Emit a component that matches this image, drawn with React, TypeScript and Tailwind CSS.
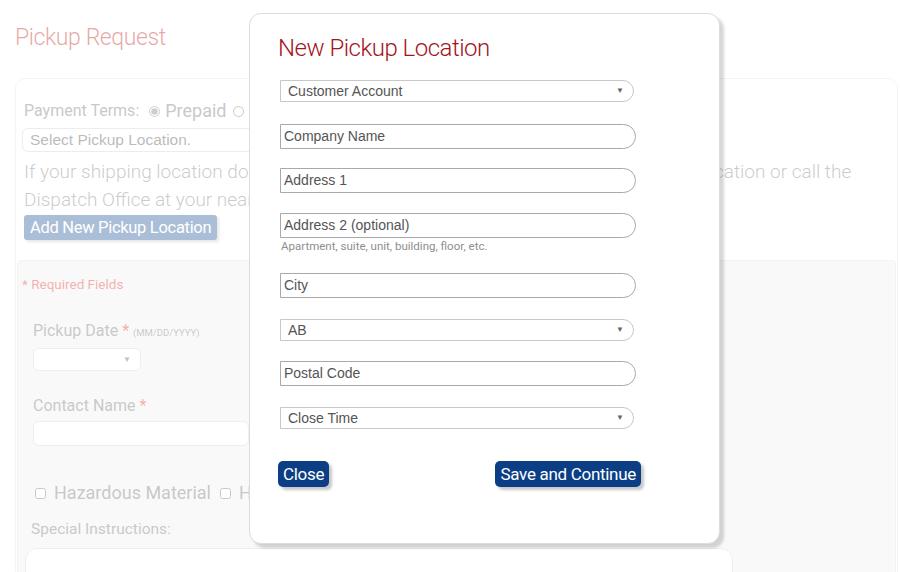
import React from 'react';

const arial = { fontFamily: '"Liberation Sans", Arial, sans-serif' };

function Arrow() {
  return <span className="absolute right-[9px] top-1/2 -translate-y-1/2 text-[8px] leading-none text-[#666]">▼</span>;
}

function ModalSelect({ label, className = '' }: { label: string; className?: string }) {
  return (
    <div
      className={`relative h-[22px] w-[354px] rounded-r-[11px] border border-[#c8c8c8] bg-white pl-[7px] text-[14px] leading-[20px] text-[#555] ${className}`}
      style={arial}
    >
      {label}
      <Arrow />
    </div>
  );
}

function ModalInput({ label, className = '' }: { label: string; className?: string }) {
  return (
    <div
      className={`h-[25px] w-[356px] rounded-r-[13px] border border-[#a9a9a9] bg-white pl-[3px] text-[14px] leading-[23px] text-[#555] ${className}`}
      style={arial}
    >
      {label}
    </div>
  );
}

function NewLocationModal() {
  const btn =
    'h-[26px] rounded-[5px] bg-[#0b3e85] text-[17px] leading-[26px] tracking-[-0.3px] text-white shadow-[3px_3px_3px_rgba(0,0,0,0.22)]';
  return (
    <div className="absolute left-[249px] top-[13px] h-[531px] w-[471px] rounded-[12px] border border-[#dcdcdc] bg-white pl-[30px] pt-[18px] shadow-[4px_4px_3px_rgba(0,0,0,0.16)]">
      <h2
        className="ml-[-2px] text-[24px] leading-[32px] tracking-[-0.5px] text-[#a3141b]"
        style={{ fontFamily: 'Roboto, sans-serif', fontWeight: 300 }}
      >
        New Pickup Location
      </h2>
      <ModalSelect label="Customer Account" className="mt-[16px]" />
      <ModalInput label="Company Name" className="mt-[22px]" />
      <ModalInput label="Address 1" className="mt-[19px]" />
      <ModalInput label="Address 2 (optional)" className="mt-[20px]" />
      <p className="mt-[1px] pl-[1px] text-[11.5px] leading-[15px] text-[#8e8e8e]" style={{ fontFamily: 'Roboto, sans-serif' }}>
        Apartment, suite, unit, building, floor, etc.
      </p>
      <ModalInput label="City" className="mt-[19px]" />
      <ModalSelect label="AB" className="mt-[21px]" />
      <ModalInput label="Postal Code" className="mt-[20px]" />
      <ModalSelect label="Close Time" className="mt-[21px]" />
      <div className="ml-[-2px] mt-[32px] flex w-[363px] items-center justify-between">
        <button className={`${btn} px-[5px]`} style={{ fontFamily: 'Roboto, sans-serif' }}>
          Close
        </button>
        <button className={`${btn} px-[5px]`} style={{ fontFamily: 'Roboto, sans-serif' }}>
          Save and Continue
        </button>
      </div>
    </div>
  );
}

export default function App() {
  const roboto = { fontFamily: 'Roboto, sans-serif' };
  return (
    <div className="relative h-[572px] w-[900px] overflow-hidden bg-white" style={roboto}>
      {/* page behind the modal */}
      <div className="pl-[15px] pr-[2px] pt-[21px]">
        <h1 className="text-[23px] leading-[33px] tracking-[-0.4px] text-[#c4261c]" style={{ fontWeight: 300 }}>
          Pickup Request
        </h1>
        <div className="mt-[24px] rounded-[10px] border border-[#e4e4e4]">
          <div className="px-[8px] pt-[21px]">
            <div className="flex items-center text-[16px] leading-[22px] text-[#767676]">
              <span>Payment Terms:</span>
              <label className="ml-[10px] flex items-center gap-[5px] text-[18px]">
                <input type="radio" defaultChecked className="h-[11px] w-[11px] accent-[#888]" />
                Prepaid
              </label>
              <label className="ml-[6px] flex items-center gap-[5px] text-[18px]">
                <input type="radio" className="h-[11px] w-[11px]" />
                Collect
              </label>
            </div>
            <div
              className="ml-[-2px] mt-[6px] h-[24px] w-[560px] rounded-[6px] border border-[#d0d0d0] bg-white pl-[7px] text-[15.5px] leading-[22px] text-[#555]"
              style={arial}
            >
              Select Pickup Location.
            </div>
            <p className="mt-[6px] whitespace-nowrap text-[19px] leading-[28px] text-[#808080]" style={{ fontWeight: 300 }}>
              If your shipping location does not appear in the list here, please add a new pickup location or call the
              <br />
              Dispatch Office at your nearest terminal.
            </p>
            <button className="mt-[1px] h-[25px] rounded-[3px] bg-[#2c5c9c] px-[6px] text-[16.5px] leading-[25px] tracking-[-0.3px] text-white shadow-[2px_2px_3px_rgba(0,0,0,0.25)]">
              Add New Pickup Location
            </button>
          </div>
          <div className="mx-[1px] mt-[20px] h-[320px] rounded-t-[4px] border border-[#e2e2e2] bg-[#f1f1f1] px-[4px] pt-[14px]">
            <p className="text-[13.5px] leading-[18px] text-[#e03a3a]">* Required Fields</p>
            <div className="ml-[11px] mt-[27px]">
              <div className="text-[16px] leading-[22px] text-[#777]">
                Pickup Date <span className="text-[#e03a3a]">*</span>{' '}
                <span className="text-[9.5px] text-[#777]">(MM/DD/YYYY)</span>
              </div>
              <div className="relative mt-[4px] h-[23px] w-[108px] rounded-[6px] border border-[#d4d4d4] bg-white">
                <Arrow />
              </div>
              <div className="mt-[24px] text-[16px] leading-[22px] text-[#777]">
                Contact Name <span className="text-[#e03a3a]">*</span>
              </div>
              <div className="mt-[4px] h-[25px] w-[216px] rounded-[6px] border border-[#d4d4d4] bg-white" />
              <div className="mt-[35px] flex items-center text-[18px] leading-[24px] text-[#777]">
                <input type="checkbox" className="ml-[2px] h-[11px] w-[11px]" />
                <span className="ml-[8px]">Hazardous Material</span>
                <input type="checkbox" className="ml-[9px] h-[11px] w-[11px]" />
                <span className="ml-[8px]">Heated Service</span>
              </div>
            </div>
            <div className="ml-[9px] mt-[13px] text-[15.5px] leading-[22px] text-[#777]">Special Instructions:</div>
            <div className="ml-[3px] mt-[8px] h-[70px] w-[708px] rounded-[12px] border border-[#d4d4d4] bg-white" />
          </div>
        </div>
      </div>

      {/* backdrop */}
      <div className="absolute inset-0 bg-white/60" />

      <NewLocationModal />
    </div>
  );
}
